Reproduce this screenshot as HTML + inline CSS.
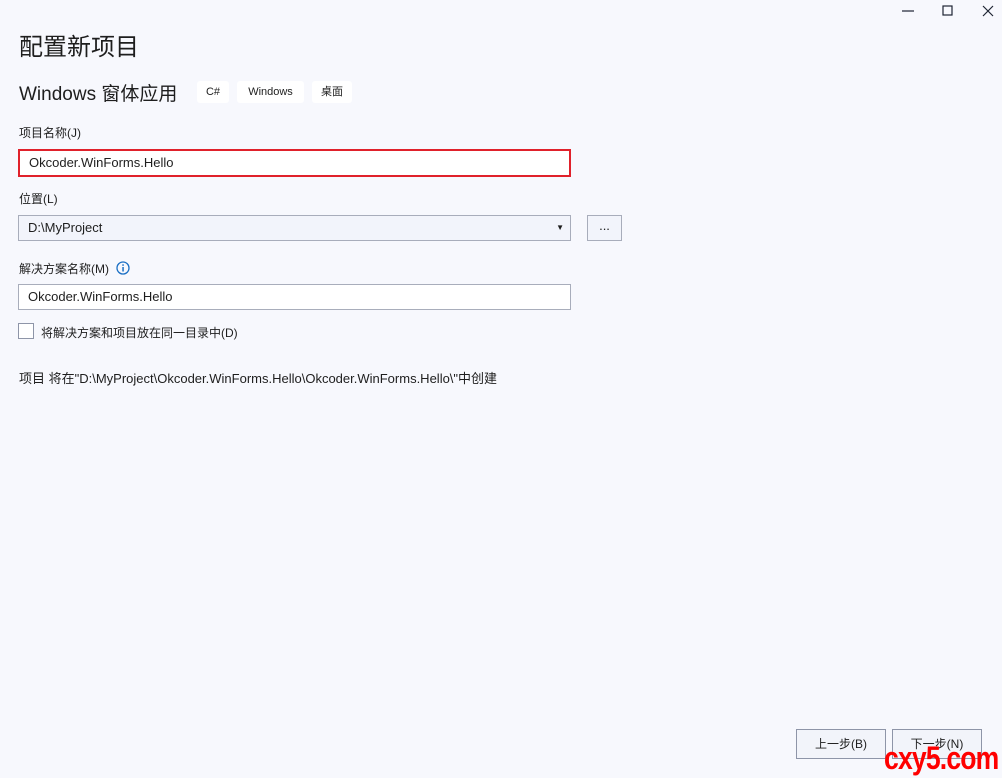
<!DOCTYPE html>
<html><head><meta charset="utf-8"><style>
body{margin:0;width:1002px;height:778px;background:#f7f8fd;font-family:"Liberation Sans","Noto Sans CJK SC",sans-serif;color:#1e1e1e;position:relative;overflow:hidden}
.a{position:absolute;white-space:nowrap}
.box{position:absolute;background:#fff;border:1px solid #c4c7d2;box-sizing:border-box;font-size:13px;padding-left:9px;line-height:24px}
.tag{position:absolute;background:#fff;border-radius:3px;font-size:11px;height:22px;line-height:22px;text-align:center}
.btn{position:absolute;border:1px solid #8e95a8;background:#f2f4fa;font-size:12px;text-align:center;line-height:28px;box-sizing:border-box}
</style></head><body>
<svg class="a" style="left:900px;top:4px" width="100" height="16">
<path d="M2 7H14" stroke="#1e2433" stroke-width="1.2"/>
<rect x="43" y="2" width="9" height="9" fill="none" stroke="#1e2433" stroke-width="1.2"/>
<path d="M83 2L93 12M93 2L83 12" stroke="#1e2433" stroke-width="1.2"/>
</svg>
<div class="a" style="left:19px;top:27px;font-size:24px">配置新项目</div>
<div class="a" style="left:19px;top:79px;font-size:19px">Windows 窗体应用</div>
<div class="tag" style="left:197px;top:81px;width:32px">C#</div>
<div class="tag" style="left:237px;top:81px;width:67px">Windows</div>
<div class="tag" style="left:312px;top:81px;width:40px">桌面</div>
<div class="a" style="left:19px;top:124px;font-size:12px">项目名称(J)</div>
<div class="box" style="left:18px;top:149px;width:553px;height:28px;border:2px solid #e0212b;line-height:24px">Okcoder.WinForms.Hello</div>
<div class="a" style="left:19px;top:190px;font-size:12px">位置(L)</div>
<div class="box" style="left:18px;top:215px;width:553px;height:26px;background:#f2f4fb;border-color:#a8adbb">D:\MyProject<span class="a" style="right:6px;top:0;font-size:8px">▼</span></div>
<div class="box" style="left:587px;top:215px;width:35px;height:26px;background:#f2f4fb;border-color:#a8adbb;padding:0;text-align:center;line-height:20px">...</div>
<div class="a" style="left:19px;top:260px;font-size:12px">解决方案名称(M)</div>
<svg class="a" style="left:116px;top:261px" width="14" height="14"><circle cx="7" cy="7" r="6" fill="none" stroke="#1a6fc4" stroke-width="1.3"/><rect x="6.3" y="6" width="1.5" height="4.5" fill="#1a6fc4"/><rect x="6.3" y="3.3" width="1.5" height="1.5" fill="#1a6fc4"/></svg>
<div class="box" style="left:18px;top:284px;width:553px;height:26px;border-color:#a8adbb">Okcoder.WinForms.Hello</div>
<div class="a" style="left:18px;top:323px;width:14px;height:14px;border:1px solid #8e95a8;background:#fff"></div>
<div class="a" style="left:41px;top:324px;font-size:12px">将解决方案和项目放在同一目录中(D)</div>
<div class="a" style="left:19px;top:368px;font-size:13px">项目 将在"D:\MyProject\Okcoder.WinForms.Hello\Okcoder.WinForms.Hello\"中创建</div>
<div class="btn" style="left:796px;top:729px;width:90px;height:30px">上一步(B)</div>
<div class="btn" style="left:892px;top:729px;width:90px;height:30px">下一步(N)</div>
<div class="a" style="left:884px;top:738px;font-size:32px;font-weight:bold;color:#f00;letter-spacing:-1px;line-height:40px;transform:scaleX(0.83);transform-origin:left top">cxy5.com</div>
</body></html>
